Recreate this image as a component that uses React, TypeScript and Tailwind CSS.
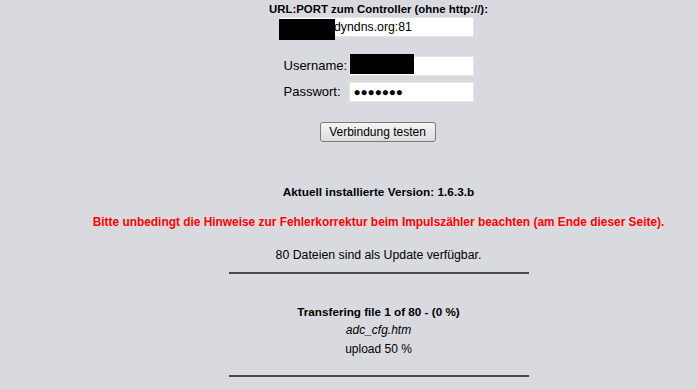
export default function App() {
  return (
    <div className="min-h-screen w-full bg-[#d9dadf] text-black text-[12px] font-['Liberation_Sans',Arial,sans-serif]">
      <div className="pl-[60px] flex flex-col items-center">
        {/* Connection form */}
        <div className="pt-[2px] font-bold text-[11.4px] leading-[14px]">URL:PORT zum Controller (ohne http://):</div>
        <div className="relative mt-[1px] ml-[-3px] w-[194px] h-[20px] bg-white border border-[#e4e4e4] flex items-center pl-[53px] text-[12.3px]">
          dyndns.org:81
          <div className="absolute left-[-2px] top-[1px] w-[56px] h-[21px] bg-black" />
        </div>

        <div className="mt-[19px] flex flex-col gap-[6px]">
          <div className="flex items-center">
            <span className="w-[65px] text-[13px]">Username:</span>
            <div className="relative w-[125px] h-[20px] bg-white border border-[#e4e4e4]">
              <div className="absolute left-0 top-[-3px] w-[64px] h-[20px] bg-black" />
            </div>
          </div>
          <div className="flex items-center">
            <span className="w-[65px] text-[13px]">Passwort:</span>
            <div className="w-[125px] h-[20px] bg-white border border-[#e4e4e4] flex items-center pl-[4px] text-[12px] tracking-[-0.2px]">
              ●●●●●●●
            </div>
          </div>
        </div>

        <button className="mt-[20px] ml-[-2px] w-[116px] h-[20px] rounded-[3px] border border-[#7a7a7a] bg-gradient-to-b from-[#f6f6f6] to-[#dcdcdc] text-[12px] leading-none text-black">
          Verbindung testen
        </button>

        {/* Version info */}
        <div className="mt-[43px] font-bold text-[11.8px] leading-[14px]">Aktuell installierte Version: 1.6.3.b</div>
        <div className="mt-[16px] font-bold text-[11.9px] text-[#ff0000] leading-[14px]">
          Bitte unbedingt die Hinweise zur Fehlerkorrektur beim Impulszähler beachten (am Ende dieser Seite).
        </div>
        <div className="mt-[19px] text-[12.3px] leading-[15px]">80 Dateien sind als Update verfügbar.</div>
        <hr className="mt-[9px] w-[300px] border-0 border-t-2 border-[#4a4a4a]" />

        {/* Transfer status */}
        <div className="mt-[31px] font-bold text-[11.7px] leading-[14px]">Transfering file 1 of 80 - (0 %)</div>
        <div className="mt-[4px] italic text-[12px] leading-[15px]">adc_cfg.htm</div>
        <div className="mt-[4px] text-[12px] leading-[15px]">upload 50 %</div>
        <hr className="mt-[18px] w-[300px] border-0 border-t-2 border-[#4a4a4a]" />
      </div>
    </div>
  );
}
